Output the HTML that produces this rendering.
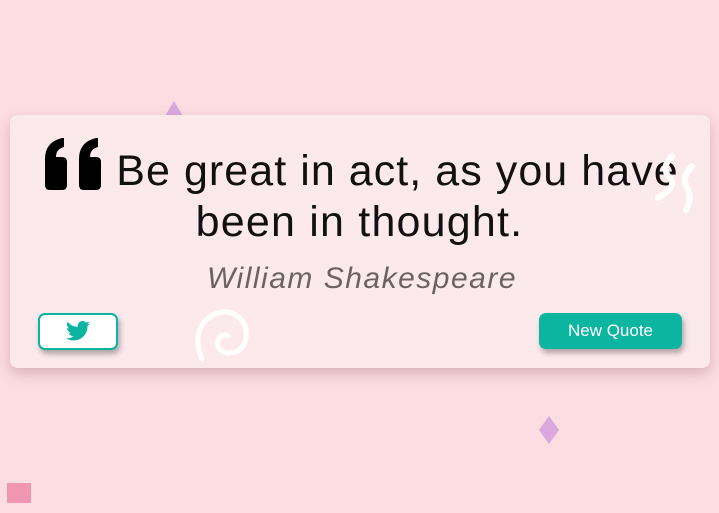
<!DOCTYPE html>
<html><head><style>
html,body{margin:0;padding:0;width:719px;height:513px;overflow:hidden;background:#fddde2;font-family:"Liberation Sans",sans-serif;position:relative}
.card{position:absolute;left:10px;top:115px;width:700px;height:253px;background:#fce9ec;border-radius:8px;box-shadow:0 6px 14px rgba(150,100,110,.35)}
.q{position:absolute;left:0;width:719px;text-align:center;color:#111;font-size:43px;letter-spacing:1.2px;white-space:nowrap}
.a{position:absolute;left:0;width:724px;text-align:center;color:#6b6264;font-size:30px;font-style:italic;letter-spacing:1.5px}
.tw{position:absolute;left:38px;top:313px;width:76px;height:33px;border:2px solid #0bb5a0;border-radius:7px;background:#fff;box-shadow:2px 4px 6px rgba(0,0,0,.3)}
.nq{position:absolute;left:539px;top:313px;width:143px;height:36px;background:#0bb5a0;border-radius:7px;color:#fff;font-size:17px;text-align:center;line-height:36px;box-shadow:2px 4px 6px rgba(0,0,0,.3)}
</style></head><body>
<svg style="position:absolute;left:160px;top:100px" width="28" height="22"><polygon points="14,1 26,21 2,21" fill="#d9a8de"/></svg>
<div class="card"></div>
<svg style="position:absolute;left:42px;top:137px" width="64" height="56" viewBox="0 0 64 56"><path d="M3 48 V22 Q3 5 20 1 L22 1 V10 Q14 12 14 20 H20 Q25 20 25 25 V48 Q25 53 20 53 H8 Q3 53 3 48Z" fill="#000"/><path d="M37 48 V22 Q37 5 54 1 L56 1 V10 Q48 12 48 20 H54 Q59 20 59 25 V48 Q59 53 54 53 H42 Q37 53 37 48Z" fill="#000"/></svg>
<div class="q" style="top:147px;padding-left:76px;box-sizing:border-box;letter-spacing:1.05px">Be great in act, as you have</div>
<div class="q" style="top:198px">been in thought.</div>
<div class="a" style="top:262px">William Shakespeare</div>
<svg style="position:absolute;left:650px;top:148px" width="50" height="70"><path d="M22 8 Q10 20 20 30 Q28 38 8 50" stroke="#fff" stroke-width="6" fill="none" stroke-linecap="round"/><path d="M42 18 Q30 30 38 42 Q42 52 36 62" stroke="#fff" stroke-width="6" fill="none" stroke-linecap="round"/></svg>
<svg style="position:absolute;left:192px;top:305px" width="64" height="60"><path d="M10 54 Q0 30 14 15 Q26 4 40 8 Q56 16 54 32 Q52 48 36 48 Q24 46 26 36 Q28 28 36 31" stroke="#fff" stroke-width="5" fill="none" stroke-linecap="round"/></svg>
<div class="tw"><svg style="position:absolute;left:26px;top:6px" width="24" height="20" viewBox="0 0 24 20"><path d="M24 2.4a9.8 9.8 0 0 1-2.8.8A4.9 4.9 0 0 0 23.3.4a9.9 9.9 0 0 1-3.1 1.2A4.9 4.9 0 0 0 11.8 6 14 14 0 0 1 1.7.9a4.9 4.9 0 0 0 1.5 6.6A4.9 4.9 0 0 1 1 6.9a4.9 4.9 0 0 0 3.9 4.8 4.9 4.9 0 0 1-2.2.1 4.9 4.9 0 0 0 4.6 3.4A9.9 9.9 0 0 1 0 17.3 14 14 0 0 0 7.5 19.5c9.1 0 14-7.5 14-14v-.6A10 10 0 0 0 24 2.4z" fill="#0bb5a0"/></svg></div>
<div class="nq">New Quote</div>
<svg style="position:absolute;left:537px;top:415px" width="24" height="30"><polygon points="12,1 22,15 12,29 2,15" fill="#d9a8de"/></svg>
<div style="position:absolute;left:7px;top:483px;width:24px;height:20px;background:#f095b2"></div>
</body></html>
